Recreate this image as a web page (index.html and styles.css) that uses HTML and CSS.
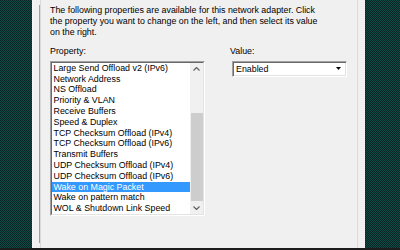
FILE: index.html
```html
<!DOCTYPE html>
<html>
<head>
<meta charset="utf-8">
<link rel="stylesheet" href="styles.css">
</head>
<body>
<div class="screen">
  <div class="desktop">
    <div class="backdrop backdrop-left"></div>
    <div class="dialog">
      <div class="page">
        <p class="desc">The following properties are available for this network adapter. Click<br>the property you want to change on the left, and then select its value<br>on the right.</p>
        <div class="fields">
          <div class="prop">
            <div class="label">Property:</div>
            <div class="listbox">
              <ul class="items">
                <li>Large Send Offload v2 (IPv6)</li>
                <li>Network Address</li>
                <li>NS Offload</li>
                <li>Priority &amp; VLAN</li>
                <li>Receive Buffers</li>
                <li>Speed &amp; Duplex</li>
                <li>TCP Checksum Offload (IPv4)</li>
                <li>TCP Checksum Offload (IPv6)</li>
                <li>Transmit Buffers</li>
                <li>UDP Checksum Offload (IPv4)</li>
                <li>UDP Checksum Offload (IPv6)</li>
                <li class="selected">Wake on Magic Packet</li>
                <li>Wake on pattern match</li>
                <li>WOL &amp; Shutdown Link Speed</li>
              </ul>
              <div class="scrollbar">
                <div class="arrow">
                  <svg width="7" height="4" viewBox="0 0 7 4"><path d="M0.5 3.5 L3.5 0.5 L6.5 3.5" fill="none" stroke="#606060" stroke-width="1.2"/></svg>
                </div>
                <div class="track"><div class="thumb"></div></div>
                <div class="arrow">
                  <svg width="7" height="4" viewBox="0 0 7 4"><path d="M0.5 0.5 L3.5 3.5 L6.5 0.5" fill="none" stroke="#606060" stroke-width="1.2"/></svg>
                </div>
              </div>
            </div>
          </div>
          <div class="value">
            <div class="label">Value:</div>
            <div class="combo">
              <span class="combo-text">Enabled</span>
              <span class="combo-btn">
                <svg width="5" height="3" viewBox="0 0 5 3"><path d="M0 0 H5 L2.5 3 Z" fill="#000"/></svg>
              </span>
            </div>
          </div>
        </div>
      </div>
    </div>
    <div class="backdrop"></div>
  </div>
  <div class="taskbar"></div>
</div>
</body>
</html>
```

FILE: styles.css
```css
* { box-sizing: border-box; }
html, body { margin: 0; padding: 0; }
body {
  width: 400px;
  height: 250px;
  overflow: hidden;
  font-family: "Liberation Sans", Arial, sans-serif;
  font-size: 8.85px;
  color: #000;
}
.screen {
  width: 400px;
  height: 250px;
  display: flex;
  flex-direction: column;
}
.desktop {
  flex: 1;
  display: flex;
  min-height: 0;
}
.backdrop {
  flex: 1;
  background-color: #082624;
  background-image: conic-gradient(#0f4944 25%, transparent 0 50%, #0f4944 0 75%, transparent 0);
  background-size: 2px 2px;
}
.backdrop-left {
  flex: 0 0 32px;
}
.dialog {
  width: 333px;
  background: #f0f0f0;
  border-left: 2px solid #f4f4f4;
  padding: 0 7px 0 6px;
  display: flex;
}
.page {
  flex: 1;
  border-left: 1px solid #dadada;
  border-right: 1px solid #dadada;
  box-shadow: -6px 0 0 -5px #a0a0a0;
  padding: 5px 0 0 9px;
  background: #f0f0f0;
}
.desc {
  margin: 0;
  line-height: 10.8px;
  white-space: nowrap;
}
.fields {
  display: flex;
  margin-top: 9px;
}
.label {
  line-height: 10.8px;
  margin-bottom: 3.7px;
}
.prop { width: 155px; }
.value { margin-left: 25px; }
.listbox {
  display: flex;
  border: 1px solid;
  border-color: #a0a0a0 #ffffff #ffffff #a0a0a0;
  background: #fff;
}
.items {
  list-style: none;
  margin: 0;
  padding: 0;
  flex: 1;
  border: 1px solid;
  border-right: 0;
  border-color: #696969 transparent #e3e3e3 #696969;
}
.items li {
  line-height: 10.8px;
  height: 10.8px;
  padding-left: 1.5px;
  white-space: nowrap;
}
.items li.selected {
  background: #3399ff;
  color: #fff;
}
.scrollbar {
  width: 14px;
  display: flex;
  flex-direction: column;
  background: #f0f0f0;
  border-top: 1px solid #696969;
  border-bottom: 1px solid #e3e3e3;
  border-right: 1px solid #e3e3e3;
}
.arrow {
  height: 13px;
  display: flex;
  align-items: center;
  justify-content: center;
}
.track {
  flex: 1;
  display: flex;
  flex-direction: column;
  justify-content: flex-end;
}
.thumb {
  height: 88px;
  margin: 0 0 0 1px;
  background: #cdcdcd;
}
.combo {
  margin-left: 2px;
  width: 115px;
  height: 16px;
  display: flex;
  background: #fff;
  border: 1px solid;
  border-color: #a0a0a0 #ffffff #ffffff #a0a0a0;
  box-shadow: inset 1px 1px 0 #696969, inset -1px -1px 0 #e3e3e3;
}
.combo-text {
  flex: 1;
  line-height: 12px;
  padding: 1px 0 0 3px;
}
.combo-btn {
  width: 13px;
  display: flex;
  align-items: center;
  justify-content: center;
  margin: 1px 1px 1px 0;
}
.taskbar {
  height: 2px;
  background: #1c1c1c;
}
```
